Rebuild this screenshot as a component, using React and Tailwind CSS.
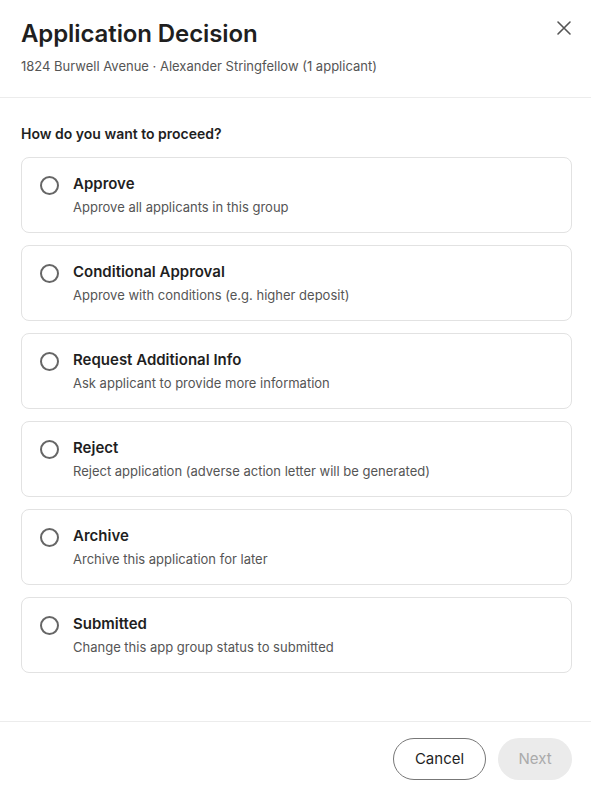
import React from "react";

const options = [
  { title: "Approve", desc: "Approve all applicants in this group" },
  { title: "Conditional Approval", desc: "Approve with conditions (e.g. higher deposit)" },
  { title: "Request Additional Info", desc: "Ask applicant to provide more information" },
  { title: "Reject", desc: "Reject application (adverse action letter will be generated)" },
  { title: "Archive", desc: "Archive this application for later" },
  { title: "Submitted", desc: "Change this app group status to submitted" },
];

export default function App() {
  return (
    <div
      className="w-[591px] h-[802px] bg-white flex flex-col text-[#1f1f1f]"
      style={{ fontFamily: "Inter, 'Liberation Sans', sans-serif" }}
    >
      <div className="relative pl-[21px] pr-[19px] pt-[19px] pb-[22px] border-b border-[#ececec]">
        <h2 className="text-[24px] leading-[30px] font-semibold tracking-[-0.1px]">Application Decision</h2>
        <p className="mt-[9px] text-[13px] leading-[17px] text-[#555]">
          1824 Burwell Avenue · Alexander Stringfellow (1 applicant)
        </p>
        <button className="absolute right-[19px] top-[20px] text-[#555]">
          <svg width="16" height="16" viewBox="0 0 16 16" fill="none" stroke="currentColor" strokeWidth="1.6" strokeLinecap="round">
            <path d="M2 2L14 14M14 2L2 14" />
          </svg>
        </button>
      </div>

      <div className="flex-1 pl-[21px] pr-[19px] pt-[27px]">
        <p className="text-[14px] leading-[18px] font-semibold mb-[14px]">How do you want to proceed?</p>
        <div className="flex flex-col gap-[12px]">
          {options.map((o) => (
            <label
              key={o.title}
              className="flex items-start gap-[14px] h-[76px] border border-[#e2e2e2] rounded-[8px] px-[18px] pt-[16px] cursor-pointer"
            >
              <span className="mt-[2px] w-[19px] h-[19px] rounded-full border-2 border-[#666] shrink-0" />
              <span className="flex flex-col">
                <span className="text-[15px] leading-[20px] font-semibold">{o.title}</span>
                <span className="mt-[5px] text-[13px] leading-[17px] text-[#555]">{o.desc}</span>
              </span>
            </label>
          ))}
        </div>
      </div>

      <div className="border-t border-[#ececec] flex justify-end gap-[12px] px-[19px] pt-[16px] pb-[22px]">
        <button className="h-[42px] w-[93px] rounded-full border border-[#777] text-[15px] text-[#1f1f1f]">Cancel</button>
        <button className="h-[42px] w-[74px] rounded-full bg-[#ebebeb] text-[15px] text-[#aaa]">Next</button>
      </div>
    </div>
  );
}
